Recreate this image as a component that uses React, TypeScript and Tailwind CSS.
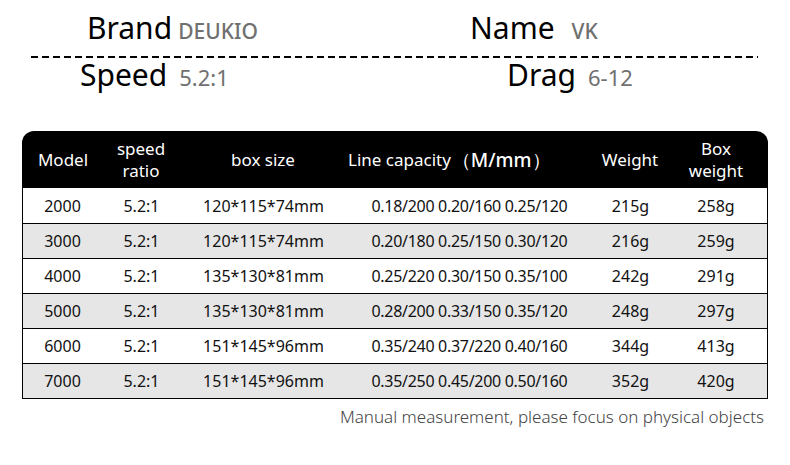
import React from "react";

const rows = [
  ["2000", "5.2:1", "120*115*74mm", "0.18/200 0.20/160 0.25/120", "215g", "258g"],
  ["3000", "5.2:1", "120*115*74mm", "0.20/180 0.25/150 0.30/120", "216g", "259g"],
  ["4000", "5.2:1", "135*130*81mm", "0.25/220 0.30/150 0.35/100", "242g", "291g"],
  ["5000", "5.2:1", "135*130*81mm", "0.28/200 0.33/150 0.35/120", "248g", "297g"],
  ["6000", "5.2:1", "151*145*96mm", "0.35/240 0.37/220 0.40/160", "344g", "413g"],
  ["7000", "5.2:1", "151*145*96mm", "0.35/250 0.45/200 0.50/160", "352g", "420g"],
];

const cols = "grid grid-cols-[80px_78px_166px_246px_76px_1fr]";

export default function App() {
  return (
    <div
      className="w-[790px] h-[465px] bg-white text-black overflow-hidden relative"
      style={{ fontFamily: '"Noto Sans", "Open Sans", sans-serif' }}
    >
      {/* Top info */}
      <div className="flex items-baseline h-[56px] pt-[8px]">
        <div className="w-[470px] pl-[87px] flex items-baseline">
          <span className="text-[30px] leading-[40px]">Brand</span>
          <span className="ml-[6px] text-[21px] font-medium text-[#707070]">DEUKIO</span>
        </div>
        <div className="flex items-baseline">
          <span className="text-[30px] leading-[40px]">Name</span>
          <span className="ml-[17px] text-[21px] font-medium text-[#707070]">VK</span>
        </div>
      </div>
      <div className="ml-[31px] w-[727px] h-[2px] bg-[repeating-linear-gradient(90deg,#000_0_7px,transparent_7px_11px)]" />
      <div className="flex items-baseline h-[44px]">
        <div className="w-[507px] pl-[80px] flex items-baseline">
          <span className="text-[30px] leading-[34px]">Speed</span>
          <span className="ml-[12px] text-[22px] text-[#707070]">5.2:1</span>
        </div>
        <div className="flex items-baseline -mt-[2px]">
          <span className="text-[30px] leading-[32px]">Drag</span>
          <span className="ml-[12px] text-[22px] text-[#707070]">6-12</span>
        </div>
      </div>

      {/* Table */}
      <div className="ml-[22px] mt-[29px] w-[746px]">
        <div className={`${cols} h-[57px] bg-black text-white rounded-t-[12px] text-[17px] leading-[22px] items-center`}>
          <div className="text-center pl-[2px]">Model</div>
          <div className="flex flex-col items-center">
            <span>speed</span>
            <span>ratio</span>
          </div>
          <div className="text-center">box size</div>
          <div className="pl-[2px] flex items-center">
            <span>Line capacity</span>
            <span className="text-[19px] font-medium ml-[1px]">（M/mm）</span>
          </div>
          <div className="text-center">Weight</div>
          <div className="flex flex-col items-center pr-[4px]">
            <span>Box</span>
            <span>weight</span>
          </div>
        </div>
        <div className="border-x border-b border-black">
          {rows.map((r, i) => (
            <div
              key={r[0]}
              className={`${cols} h-[35px] items-center text-[16px] text-[#111] ${i % 2 === 1 ? "bg-[#e6e6e6]" : "bg-white"} ${i > 0 ? "border-t border-black" : ""}`}
            >
              <div className="text-center -ml-[1px]">{r[0]}</div>
              <div className="text-center -ml-[1px]">{r[1]}</div>
              <div className="text-center -ml-[1px]">{r[2]}</div>
              <div className="text-center -ml-[1px] tracking-[-0.3px]">{r[3]}</div>
              <div className="text-center -ml-[1px]">{r[4]}</div>
              <div className="text-center pr-[4px]">{r[5]}</div>
            </div>
          ))}
        </div>
      </div>

      <div className="mt-[5px] pr-[26px] text-right text-[17px] text-[#444] font-light">
        Manual measurement, please focus on physical objects
      </div>
    </div>
  );
}
